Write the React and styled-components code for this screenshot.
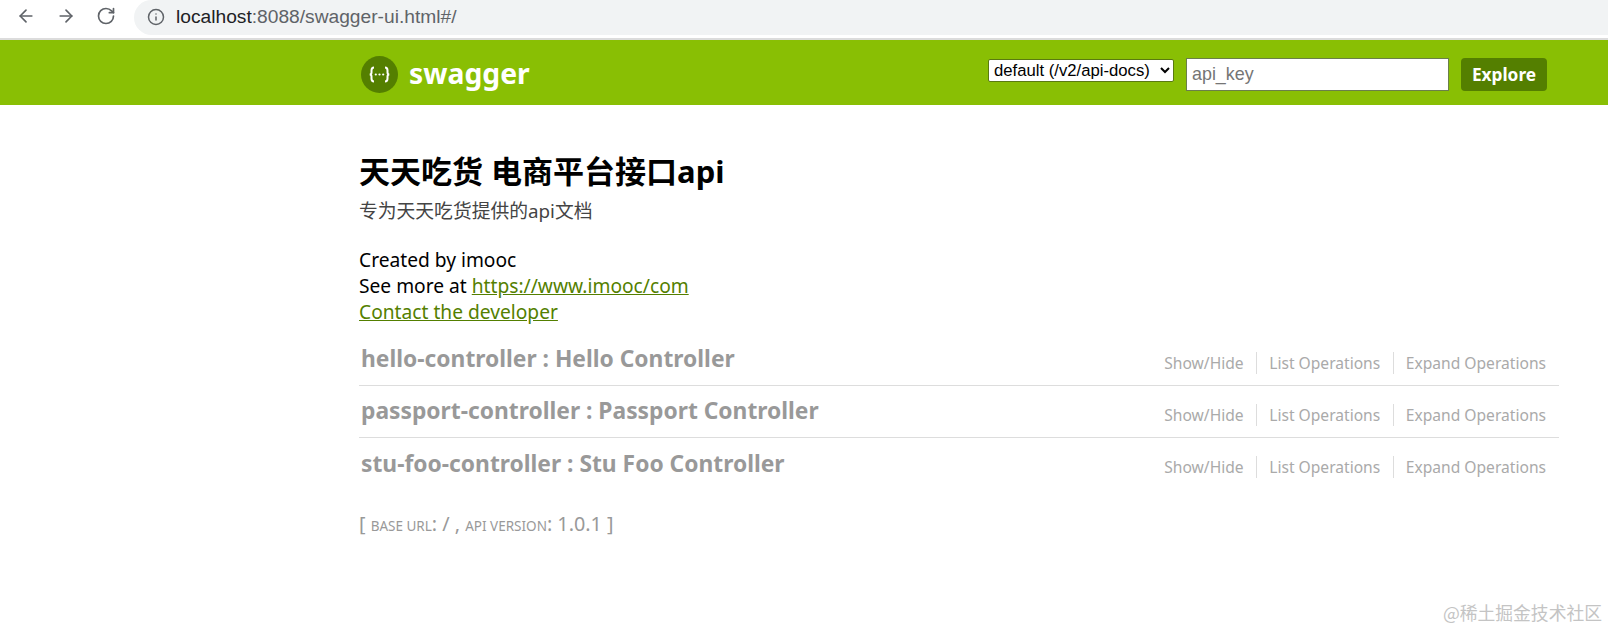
import React from 'react';
import styled, { createGlobalStyle } from 'styled-components';
import { ArrowLeft, ArrowRight, RotateCw, Info } from 'lucide-react';

const GlobalStyle = createGlobalStyle`
  html, body {
    margin: 0;
    padding: 0;
    background: #fff;
  }
  body {
    font-family: 'Noto Sans', 'Noto Sans CJK SC', sans-serif;
    overflow: hidden;
  }
`;

const Page = styled.div`
  position: relative;
  width: 1608px;
  height: 633px;
  overflow: hidden;
`;

const BrowserBar = styled.div`
  display: flex;
  align-items: center;
  height: 35px;
  padding: 0 0 3px 16px;
  background: #fff;
  border-bottom: 2px solid #dcdcdc;
`;

const NavButton = styled.span`
  display: flex;
  width: 20px;
  justify-content: center;
  margin: -3px 20px 0 0;
  color: #5f6368;
`;

const AddressBar = styled.div`
  display: flex;
  align-items: center;
  flex: 1;
  height: 33px;
  margin-left: -2px;
  padding: 0 0 2px 13px;
  background: #f1f3f4;
  border-radius: 18px 0 0 18px;
  font-family: 'Liberation Sans', sans-serif;
  font-size: 19.2px;
  color: #5f6368;
`;

const Host = styled.span`
  margin-left: 11px;
  color: #202124;
`;

const HostPath = styled.span`
  color: #5f6368;
`;

const Header = styled.header`
  display: flex;
  align-items: center;
  height: 61px;
  padding: 4px 61px 0 361px;
  background: #89bf04;
`;

const Brand = styled.div`
  display: flex;
  align-items: center;
  flex: 1;
  gap: 11px;
`;

const LogoText = styled.span`
  font-size: 28.3px;
  font-weight: 700;
  color: #fff;
  margin-top: -4px;
`;

const ApiSelect = styled.select`
  width: 186px;
  height: 23px;
  margin: -9px 12px 0 0;
  padding: 0 0 0 1px;
  font-family: 'Liberation Sans', sans-serif;
  font-size: 16.7px;
  background: #fff;
  color: #000;
  border: 1px solid #5a7a10;
  border-radius: 2px;
`;

const KeyInput = styled.input`
  box-sizing: border-box;
  width: 263px;
  height: 33px;
  margin-right: 12px;
  padding: 0 5px;
  font-family: 'Liberation Sans', sans-serif;
  font-size: 17.9px;
  border: 1px solid #6b7f4a;
  background: #fff;
  &::placeholder {
    color: #757575;
  }
`;

const ExploreButton = styled.a`
  display: flex;
  align-items: center;
  justify-content: center;
  width: 86px;
  height: 33px;
  background: #547f00;
  border-radius: 4px;
  font-size: 17.3px;
  font-weight: 700;
  color: #fff;
`;

const Content = styled.main`
  width: 1200px;
  margin-left: 359px;
  padding-top: 46px;
`;

const Title = styled.h1`
  margin: 0;
  font-size: 31px;
  line-height: 40px;
  font-weight: 700;
  color: #000;
`;

const Description = styled.p`
  margin: 7px 0 23px;
  font-size: 18.8px;
  line-height: 26px;
  color: #444;
`;

const InfoLine = styled.div`
  font-size: 19.2px;
  line-height: 26px;
  color: #000;
`;

const InfoLink = styled.a`
  color: #547f00;
  text-decoration: underline;
`;

const ResourceList = styled.ul`
  list-style: none;
  margin: 9px 0 0;
  padding: 0;
`;

const Resource = styled.li`
  display: flex;
  align-items: center;
  justify-content: space-between;
  height: 52px;
  border-bottom: ${(p) => (p.$last ? 'none' : '1px solid #ddd')};
  box-sizing: border-box;
`;

const ResourceName = styled.h2`
  margin: 0 0 2px 2px;
  font-size: 22.8px;
  font-weight: 700;
  color: #999;
`;

const Actions = styled.div`
  display: flex;
  align-items: center;
  padding-right: 13px;
  margin-top: 6px;
`;

const Action = styled.a`
  padding: 0 12.3px;
  font-size: 15.6px;
  line-height: 22px;
  color: #aaa;
  border-left: ${(p) => (p.$first ? 'none' : '1px solid #ddd')};
  &:last-child {
    padding-right: 0;
  }
`;

const ApiInfo = styled.div`
  margin-top: 21px;
  font-size: 19.8px;
  line-height: 26px;
  color: #999;
`;

const SmallCaps = styled.span`
  font-size: 13.5px;
  text-transform: uppercase;
`;

const Watermark = styled.div`
  position: absolute;
  right: 6px;
  bottom: 8px;
  font-family: 'Noto Sans CJK SC', sans-serif;
  font-size: 17.8px;
  color: #c4c4c4;
`;

function LogoIcon() {
  return (
    <svg width="37" height="37" viewBox="0 0 37 37">
      <circle cx="18.5" cy="18.5" r="18.5" fill="#547f00" />
      <path
        d="M13 11.5c-2.5 0-2.5 1.300-2.500 3v2c0 1.300-.8 2-1.800 2 1 0 1.800.7 1.800 2v2c0 1.700 0 3 2.500 3M24 11.500c2.500 0 2.500 1.300 2.500 3v2c0 1.300.8 2 1.800 2-1 0-1.800.7-1.800 2v2c0 1.700 0 3-2.500 3"
        fill="none"
        stroke="#fff"
        strokeWidth="2"
      />
      <circle cx="14.8" cy="18.5" r="1.100" fill="#fff" />
      <circle cx="18.5" cy="18.5" r="1.100" fill="#fff" />
      <circle cx="22.2" cy="18.5" r="1.100" fill="#fff" />
    </svg>
  );
}

const resources = [
  'hello-controller : Hello Controller',
  'passport-controller : Passport Controller',
  'stu-foo-controller : Stu Foo Controller',
];

export default function App() {
  return (
    <Page>
      <GlobalStyle />
      <BrowserBar>
        <NavButton><ArrowLeft size={22} /></NavButton>
        <NavButton><ArrowRight size={22} /></NavButton>
        <NavButton><RotateCw size={20} /></NavButton>
        <AddressBar>
          <Info size={18} />
          <Host>localhost<HostPath>:8088/swagger-ui.html#/</HostPath></Host>
        </AddressBar>
      </BrowserBar>
      <Header>
        <Brand>
          <LogoIcon />
          <LogoText>swagger</LogoText>
        </Brand>
        <ApiSelect defaultValue="default">
          <option value="default">default (/v2/api-docs)</option>
        </ApiSelect>
        <KeyInput placeholder="api_key" />
        <ExploreButton>Explore</ExploreButton>
      </Header>
      <Content>
        <Title>天天吃货 电商平台接口api</Title>
        <Description>专为天天吃货提供的api文档</Description>
        <InfoLine>Created by imooc</InfoLine>
        <InfoLine>See more at <InfoLink>https://www.imooc/com</InfoLink></InfoLine>
        <InfoLine><InfoLink>Contact the developer</InfoLink></InfoLine>
        <ResourceList>
          {resources.map((name, i) => (
            <Resource key={name} $last={i === resources.length - 1}>
              <ResourceName>{name}</ResourceName>
              <Actions>
                <Action $first>Show/Hide</Action>
                <Action>List Operations</Action>
                <Action>Expand Operations</Action>
              </Actions>
            </Resource>
          ))}
        </ResourceList>
        <ApiInfo>[ <SmallCaps>base url</SmallCaps>: / , <SmallCaps>api version</SmallCaps>: 1.0.1 ]</ApiInfo>
      </Content>
      <Watermark>@稀土掘金技术社区</Watermark>
    </Page>
  );
}
